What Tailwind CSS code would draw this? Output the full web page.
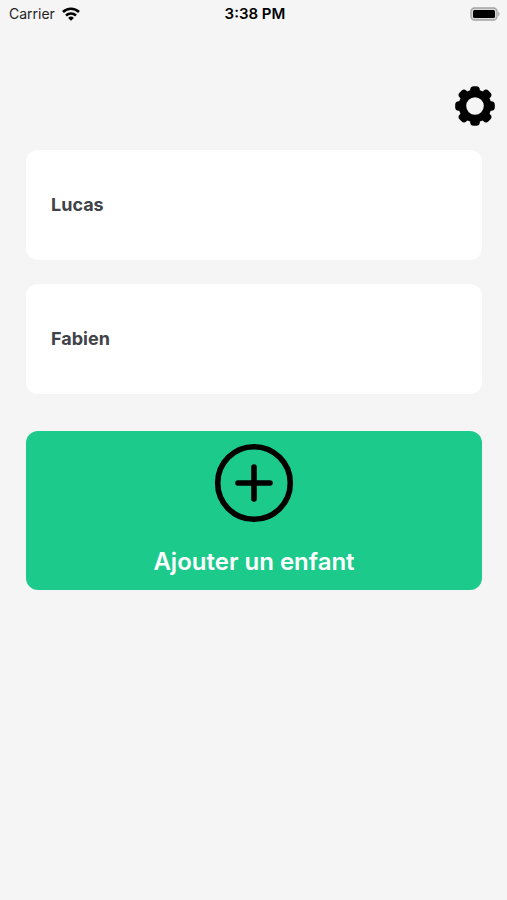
<!DOCTYPE html>
<html lang="fr">

<head>
    <meta charset="UTF-8">
    <meta name="viewport" content="width=device-width, initial-scale=1.0">
    <title>Mes enfants</title>
    <script src="https://cdn.jsdelivr.net/npm/@tailwindcss/browser@4"></script>
</head>

<body class="min-h-screen bg-[#f5f5f5] font-['Inter',sans-serif] text-black">

    <!-- Status bar -->
    <header class="grid grid-cols-3 items-center h-7 pl-[9px] pr-1.5 text-sm">
        <div class="flex items-center gap-[7px] text-[#222222]">
            <span>Carrier</span>
            <svg class="w-[18px] h-[14px]" viewBox="0 0 18 14" fill="none" stroke="#000" stroke-width="2.6" aria-hidden="true">
                <path d="M1 5a11.4 11.4 0 0 1 16 0" />
                <path d="M4 8.5a7.2 7.2 0 0 1 10 0" />
                <path d="M9 13.8L6.1 10.9a4.2 4.2 0 0 1 5.8 0z" fill="#000" stroke="none" />
            </svg>
        </div>
        <time class="text-center text-[15px] font-semibold">3:38 PM</time>
        <svg class="justify-self-end w-[31px] h-[14px]" viewBox="0 0 31 14" aria-hidden="true">
            <rect x="1" y="1" width="26" height="12" rx="3.5" fill="#d8d8d8" stroke="#a3a3a3" stroke-width="1.3" />
            <rect x="3" y="3" width="22" height="8" rx="1.5" fill="#000" />
            <path d="M28.2 4.8v4.4c1.8-.6 1.8-3.8 0-4.4z" fill="#a3a3a3" />
        </svg>
    </header>

    <!-- Settings -->
    <div class="flex justify-end pt-[58px] pr-3">
        <button type="button" aria-label="Paramètres">
            <svg class="block w-10 h-10" viewBox="-20 -20 40 40" aria-hidden="true">
                <circle r="12.6" fill="none" stroke="#000" stroke-width="7.6" />
                <g fill="#000">
                    <rect x="-4.8" y="-19.8" width="9.6" height="10" rx="3.6" />
                    <rect x="-4.8" y="-19.8" width="9.6" height="10" rx="3.6" transform="rotate(90)" />
                    <rect x="-4.8" y="-19.8" width="9.6" height="10" rx="3.6" transform="rotate(180)" />
                    <rect x="-4.8" y="-19.8" width="9.6" height="10" rx="3.6" transform="rotate(270)" />
                    <rect x="-4.8" y="-20.4" width="9.6" height="10" rx="3.6" transform="rotate(45)" />
                    <rect x="-4.8" y="-20.4" width="9.6" height="10" rx="3.6" transform="rotate(135)" />
                    <rect x="-4.8" y="-20.4" width="9.6" height="10" rx="3.6" transform="rotate(225)" />
                    <rect x="-4.8" y="-20.4" width="9.6" height="10" rx="3.6" transform="rotate(315)" />
                </g>
            </svg>
        </button>
    </div>

    <main class="pl-[26px] pr-[25px] pt-6">
        <!-- Children -->
        <ul class="space-y-6 text-lg font-bold text-[#404348]">
            <li>
                <button type="button" class="w-full h-[110px] px-[25px] rounded-xl bg-white text-left">Lucas</button>
            </li>
            <li>
                <button type="button" class="w-full h-[110px] px-[25px] rounded-xl bg-white text-left">Fabien</button>
            </li>
        </ul>

        <!-- Add a child -->
        <button type="button"
            class="flex flex-col items-center gap-[23px] w-full mt-[37px] py-3 rounded-xl bg-[#1cca8c] text-2xl font-semibold text-white">
            <svg class="w-20 h-20" viewBox="0 0 80 80" fill="none" stroke="#000" stroke-linecap="round" aria-hidden="true">
                <circle cx="40" cy="40" r="36.3" stroke-width="5.6" />
                <path d="M40 24v32M24 40h32" stroke-width="5.6" />
            </svg>
            <span>Ajouter un enfant</span>
        </button>
    </main>
</body>

</html>
